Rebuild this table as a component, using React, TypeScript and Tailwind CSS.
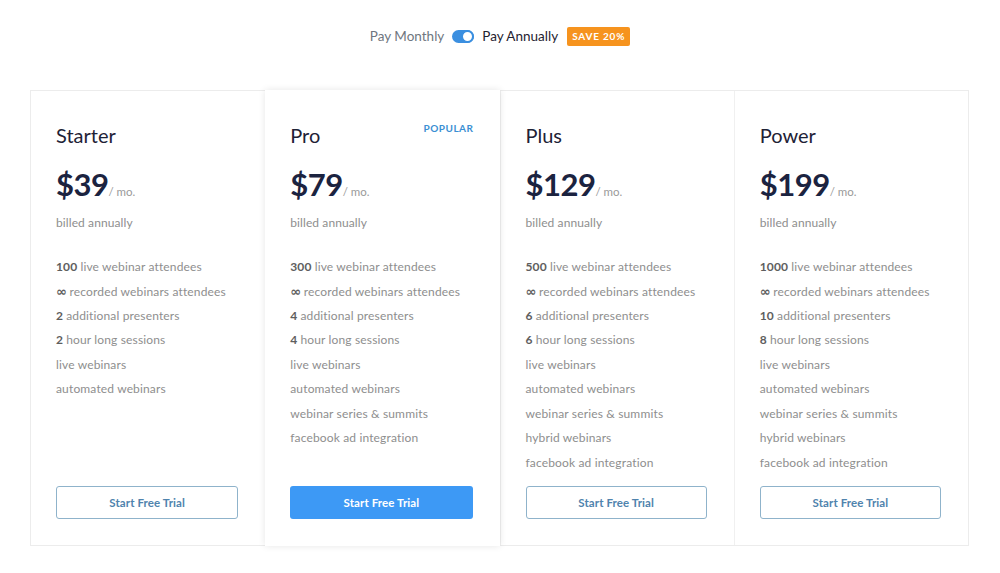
import React from "react"

type Plan = {
  name: string
  price: string
  popular?: boolean
  features: { bold?: string; text: string }[]
}

const plans: Plan[] = [
  {
    name: "Starter",
    price: "$39",
    features: [
      { bold: "100", text: "live webinar attendees" },
      { bold: "∞", text: "recorded webinars attendees" },
      { bold: "2", text: "additional presenters" },
      { bold: "2", text: "hour long sessions" },
      { text: "live webinars" },
      { text: "automated webinars" },
    ],
  },
  {
    name: "Pro",
    price: "$79",
    popular: true,
    features: [
      { bold: "300", text: "live webinar attendees" },
      { bold: "∞", text: "recorded webinars attendees" },
      { bold: "4", text: "additional presenters" },
      { bold: "4", text: "hour long sessions" },
      { text: "live webinars" },
      { text: "automated webinars" },
      { text: "webinar series & summits" },
      { text: "facebook ad integration" },
    ],
  },
  {
    name: "Plus",
    price: "$129",
    features: [
      { bold: "500", text: "live webinar attendees" },
      { bold: "∞", text: "recorded webinars attendees" },
      { bold: "6", text: "additional presenters" },
      { bold: "6", text: "hour long sessions" },
      { text: "live webinars" },
      { text: "automated webinars" },
      { text: "webinar series & summits" },
      { text: "hybrid webinars" },
      { text: "facebook ad integration" },
    ],
  },
  {
    name: "Power",
    price: "$199",
    features: [
      { bold: "1000", text: "live webinar attendees" },
      { bold: "∞", text: "recorded webinars attendees" },
      { bold: "10", text: "additional presenters" },
      { bold: "8", text: "hour long sessions" },
      { text: "live webinars" },
      { text: "automated webinars" },
      { text: "webinar series & summits" },
      { text: "hybrid webinars" },
      { text: "facebook ad integration" },
    ],
  },
]

function PlanCard({ plan }: { plan: Plan }) {
  return (
    <div
      className={
        plan.popular
          ? "relative z-10 -my-px flex h-[456px] flex-col bg-white pt-[31px] pr-[27px] pb-[27px] pl-[25px] shadow-[0_0_7px_rgba(0,0,0,0.1)]"
          : "flex h-[454px] flex-col bg-white pt-[30px] pr-[27px] pb-[26px] pl-[25px]"
      }
    >
      {plan.popular && (
        <span className="absolute top-[31px] right-[26px] text-[10px] font-bold tracking-[0.5px] text-[#3b8fd3]">
          POPULAR
        </span>
      )}
      <h2 className="text-[20px] leading-[28px] font-normal text-[#1e2236]">{plan.name}</h2>
      <div className="mt-[17px] flex items-baseline leading-[36px]">
        <span className="text-[31px] font-bold tracking-[-0.5px] text-[#1b2340]">{plan.price}</span>
        <span className="text-[11.5px] text-[#9a9a9a]">/ mo.</span>
      </div>
      <p className="mt-[5px] text-[12px] leading-[16px] tracking-[0.1px] text-[#8e8e8e]">billed annually</p>
      <ul className="mt-[24px] flex flex-col">
        {plan.features.map((f, i) => (
          <li key={i} className="text-[12px] leading-[24.4px] tracking-[0.15px] text-[#8e8e8e]">
            {f.bold === "∞" ? (
              <>
                <span className="font-['DejaVu_Sans',sans-serif] text-[13px] font-bold tracking-[-0.5px] text-[#5e5e5e]">∞</span>{" "}
              </>
            ) : (
              f.bold && <span className="font-bold text-[#5e5e5e]">{f.bold} </span>
            )}
            {f.text}
          </li>
        ))}
      </ul>
      <button
        className={
          plan.popular
            ? "mt-auto h-[33px] w-full rounded-[3px] bg-[#3d99f5] text-[11.5px] font-bold tracking-[0.1px] text-white"
            : "mt-auto h-[33px] w-full rounded-[3px] border border-[#8fb3cb] bg-white text-[11.5px] font-bold tracking-[0.1px] text-[#4f83ad]"
        }
      >
        Start Free Trial
      </button>
    </div>
  )
}

export default function App() {
  return (
    <div className="min-h-[573px] w-full bg-white font-['Lato',sans-serif]">
      <div className="flex items-center justify-center pt-[26px]">
        <span className="text-[13.5px] text-[#6f7680]">Pay Monthly</span>
        <div className="mx-[8px] flex h-[13px] w-[22px] items-center justify-end rounded-full bg-[#3b8fe0]">
          <div className="h-[13px] w-[13px] rounded-full border-2 border-[#3b8fe0] bg-white" />
        </div>
        <span className="text-[13.5px] text-[#1f2330]">Pay Annually</span>
        <span className="ml-[9px] rounded-[2px] bg-[#f6931e] px-[5px] py-[3px] text-[10px] leading-[13px] font-bold tracking-[0.8px] text-white">
          SAVE 20%
        </span>
      </div>
      <div className="mt-[44px] ml-[30px] grid w-[939px] grid-cols-4 border border-[#ececec]">
        {plans.map((p, i) => (
          <div key={p.name} className={i === 2 || i === 3 ? "border-l border-[#f0f0f0]" : ""}>
            <PlanCard plan={p} />
          </div>
        ))}
      </div>
    </div>
  )
}
